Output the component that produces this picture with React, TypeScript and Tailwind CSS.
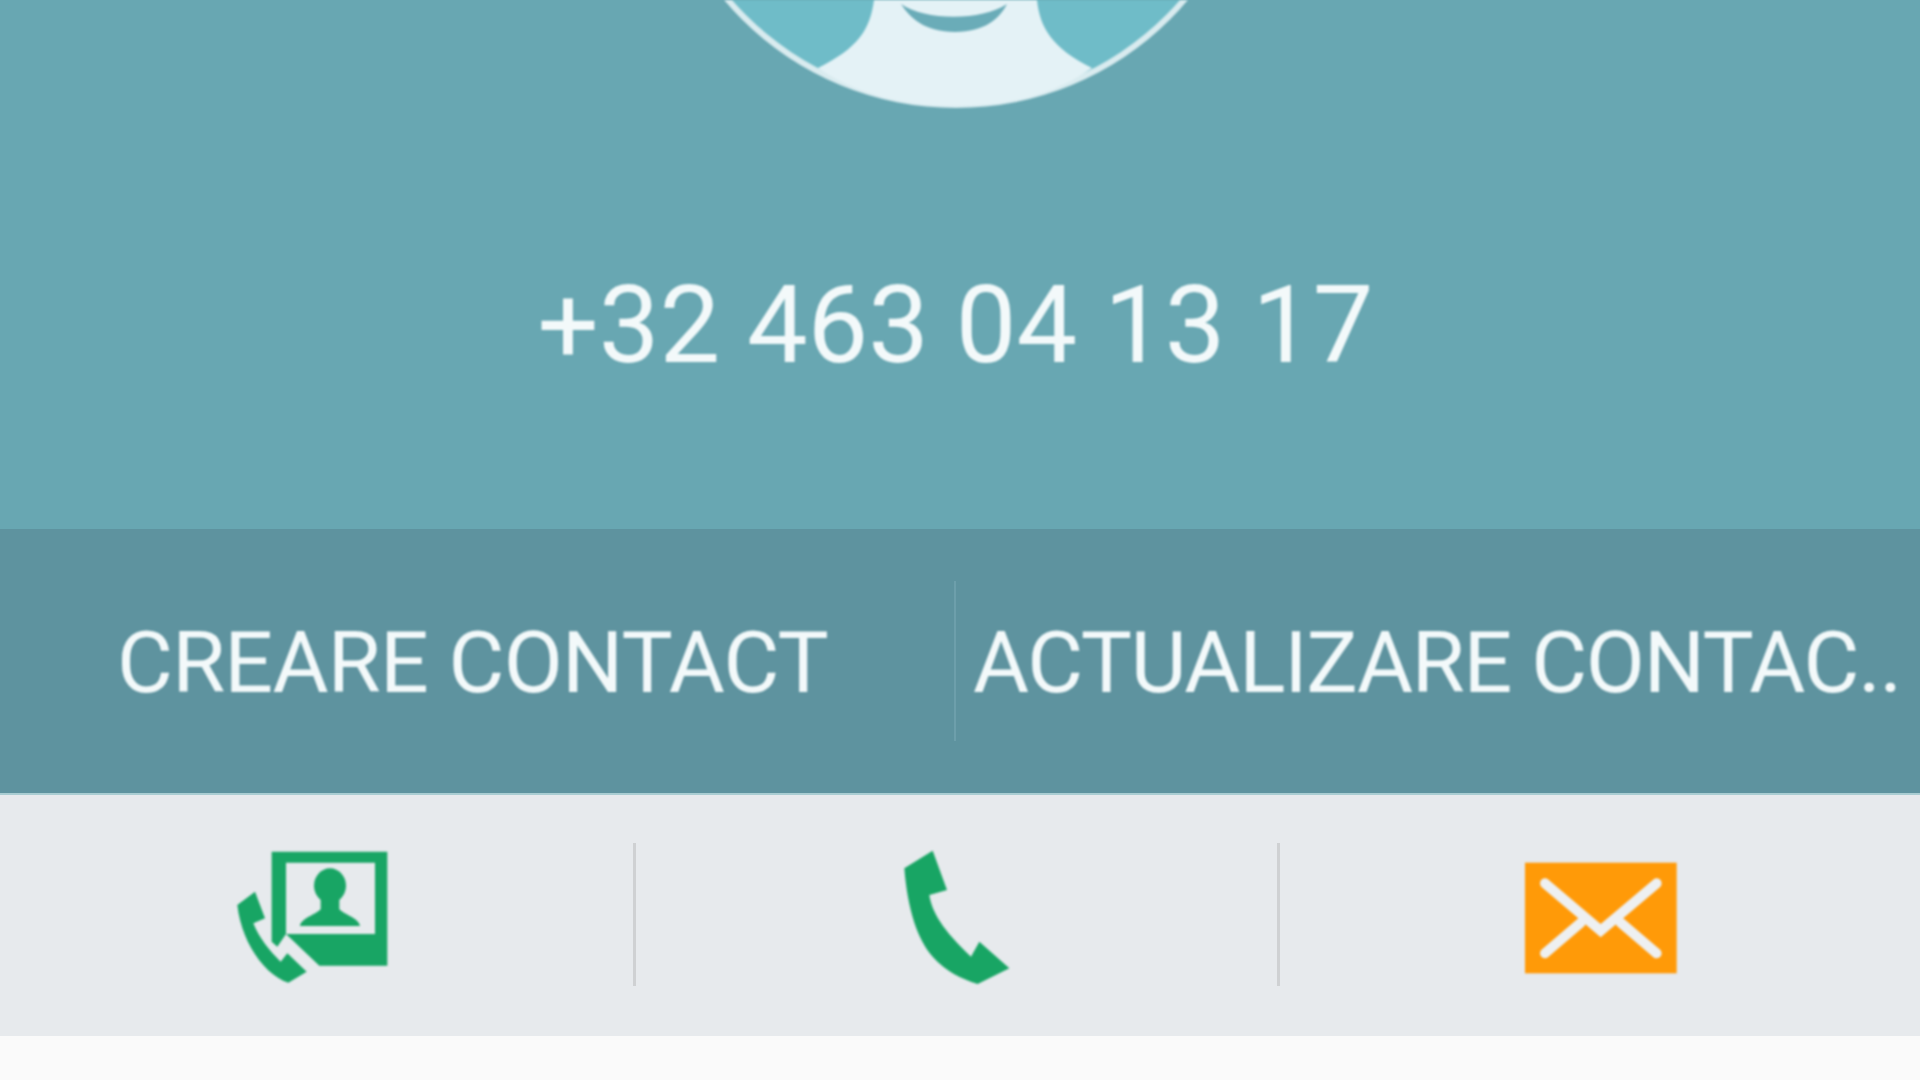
export default function App() {
  return (
    <div className="w-[1920px] h-[1080px] overflow-hidden flex flex-col bg-[#fafafa] font-['Roboto',sans-serif]">
      <div className="h-[529px] shrink-0 bg-[#68a7b2] flex flex-col items-center">
        <svg width="640" height="120" viewBox="636 0 640 120" className="blur-[1px] ml-[-8px]">
          <circle cx="956" cy="-195" r="303" fill="#d9ebef" />
          <circle cx="956" cy="-195" r="297" fill="#6fbcc8" />
          <path d="M874 0 C870 30 858 48 818 68 C860 96 905 106 956 106 C1008 106 1052 96 1092 68 C1052 48 1040 28 1037 0 Z" fill="#e4f2f6" />
          <path d="M901 4 C925 21 982 21 1007 4 C1000 18 985 32 955 32 C925 32 910 18 901 4 Z" fill="#6aacb8" />
        </svg>
        <div className="mt-[151px] ml-[-9px] text-[108px] leading-[108px] text-[#f3f9fa] whitespace-nowrap blur-[0.8px]">+32 463 04 13 17</div>
      </div>
      <div className="h-[266px] shrink-0 bg-[#5e939f] border-b-2 border-[#a9cdd2] flex items-center text-[86px] leading-[100px] text-[#f3f9fa] whitespace-nowrap overflow-hidden">
        <div className="w-[954px] shrink-0 pl-[117px] pt-[4px] tracking-[-0.8px] blur-[0.8px]">CREARE CONTACT</div>
        <div className="w-[2px] h-[160px] shrink-0 bg-[#6d9fab]" />
        <div className="flex-1 pl-[17px] pt-[4px] tracking-[-1.3px] blur-[0.8px]">ACTUALIZARE CONTAC..</div>
      </div>
      <div className="h-[241px] shrink-0 bg-[#e7eaed] flex items-start">
        <div className="w-[633px] flex justify-center pt-[25px] pl-[6px]">
          <svg width="240" height="180" viewBox="0 0 720 540" className="blur-[0.9px]">
            <path fillRule="evenodd" d="M215 95 H562 V437 H358 L258 342 L232 380 L215 365 Z M258 128 V342 H525 V128 Z" fill="#18a564" />
            <ellipse cx="390" cy="197" rx="48" ry="52" fill="#18a564" />
            <path d="M300 318 C303 295 345 285 362 268 V235 H418 V268 C435 285 477 295 480 318 Z" fill="#18a564" />
            <path d="M112 255 L165 215 L195 295 L160 310 C175 350 210 395 242 425 L262 400 L320 455 L265 488 C195 465 125 370 112 255 Z" fill="#18a564" />
          </svg>
        </div>
        <div className="w-[3px] h-[143px] mt-[48px] bg-[#cfd1d3]" />
        <div className="w-[641px] flex justify-center pt-[35px] pr-[12px]">
          <svg width="180" height="170" viewBox="0 0 540 510" className="blur-[0.9px]">
            <path d="M130 115 L215 62 L258 180 L205 195 C212 245 245 300 330 380 L355 335 L445 415 L350 462 C300 445 255 425 215 380 C170 330 140 240 130 115 Z" fill="#18a564" />
          </svg>
        </div>
        <div className="w-[3px] h-[143px] mt-[48px] bg-[#cfd1d3]" />
        <div className="flex-1 flex justify-center pt-[45px]">
          <svg width="240" height="180" viewBox="0 0 720 540" className="blur-[0.8px]">
            <rect x="135" y="68" width="455" height="332" fill="#ff9a08" />
            <path d="M195 130 L362 272 L530 130 M195 340 L302 248 M530 340 L422 248" fill="none" stroke="#eef0f1" strokeWidth="30" strokeLinecap="round" strokeLinejoin="miter" />
          </svg>
        </div>
      </div>
      <div className="flex-1" />
    </div>
  );
}
